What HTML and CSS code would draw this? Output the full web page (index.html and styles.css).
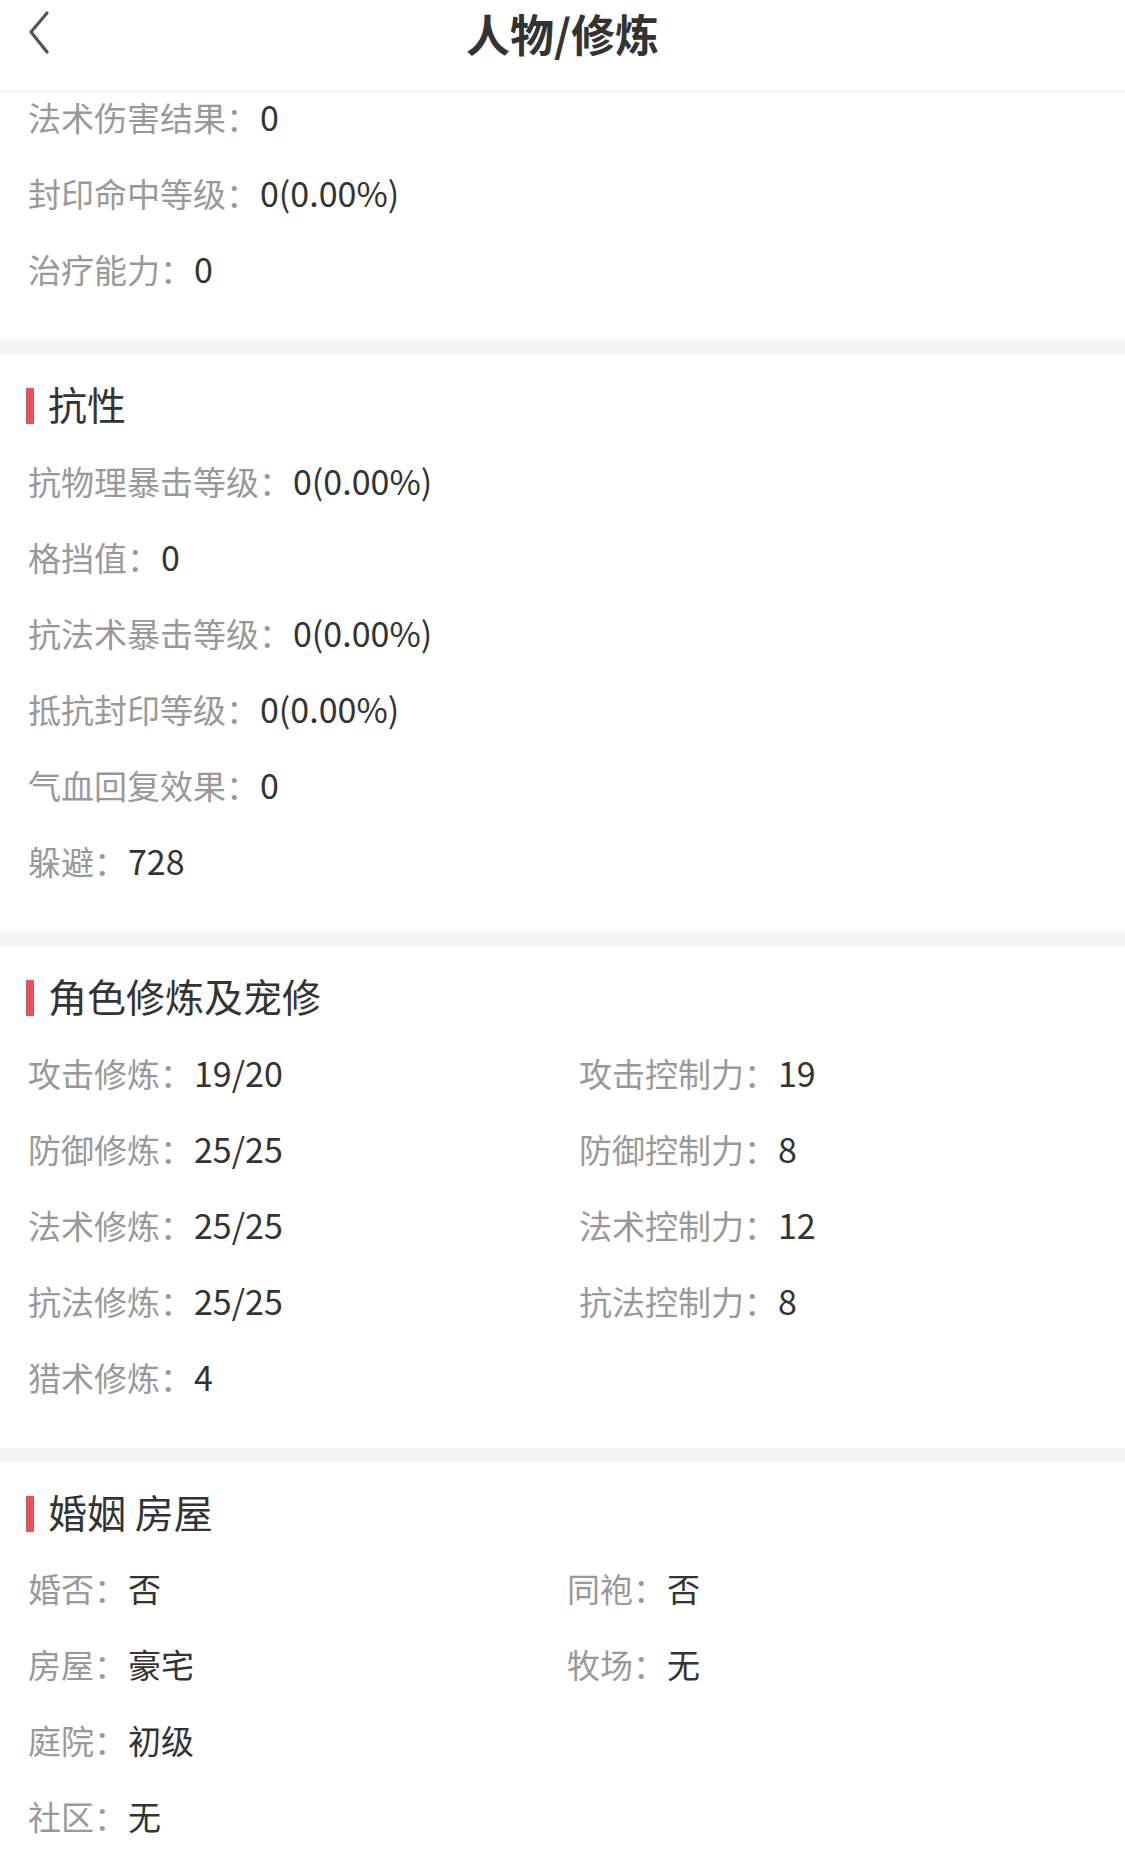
FILE: index.html
```html
<!DOCTYPE html>
<html lang="zh-CN">
<head>
    <meta charset="UTF-8">
    <title>人物/修炼</title>
    <meta name="viewport" content="width=device-width, initial-scale=1.0">
    <link rel="stylesheet" href="styles.css">
</head>
<body>
    <header class="nav">
        <a class="nav-back" href="#">
            <svg width="24" height="46" viewBox="0 0 24 46">
                <polyline points="19,3 3,22 19,42" fill="none" stroke="#555" stroke-width="3.2" stroke-linecap="round" stroke-linejoin="round"/>
            </svg>
        </a>
        <h1 class="nav-title">人物/修炼</h1>
        <span></span>
    </header>

    <main class="page">
        <section class="panel panel-cut">
            <ul class="attrs">
                <li><span class="label">法术伤害结果：</span><span class="value num">0</span></li>
                <li><span class="label">封印命中等级：</span><span class="value num">0(0.00%)</span></li>
                <li><span class="label">治疗能力：</span><span class="value num">0</span></li>
            </ul>
        </section>

        <section class="panel">
            <h2 class="panel-title">抗性</h2>
            <ul class="attrs">
                <li><span class="label">抗物理暴击等级：</span><span class="value num">0(0.00%)</span></li>
                <li><span class="label">格挡值：</span><span class="value num">0</span></li>
                <li><span class="label">抗法术暴击等级：</span><span class="value num">0(0.00%)</span></li>
                <li><span class="label">抵抗封印等级：</span><span class="value num">0(0.00%)</span></li>
                <li><span class="label">气血回复效果：</span><span class="value num">0</span></li>
                <li><span class="label">躲避：</span><span class="value num">728</span></li>
            </ul>
        </section>

        <section class="panel">
            <h2 class="panel-title">角色修炼及宠修</h2>
            <ul class="attrs cols cols-wide">
                <li><span class="label">攻击修炼：</span><span class="value num">19/20</span></li>
                <li><span class="label">攻击控制力：</span><span class="value num">19</span></li>
                <li><span class="label">防御修炼：</span><span class="value num">25/25</span></li>
                <li><span class="label">防御控制力：</span><span class="value num">8</span></li>
                <li><span class="label">法术修炼：</span><span class="value num">25/25</span></li>
                <li><span class="label">法术控制力：</span><span class="value num">12</span></li>
                <li><span class="label">抗法修炼：</span><span class="value num">25/25</span></li>
                <li><span class="label">抗法控制力：</span><span class="value num">8</span></li>
                <li><span class="label">猎术修炼：</span><span class="value num">4</span></li>
            </ul>
        </section>

        <section class="panel">
            <h2 class="panel-title">婚姻 房屋</h2>
            <ul class="attrs cols">
                <li><span class="label">婚否：</span><span class="value">否</span></li>
                <li><span class="label">同袍：</span><span class="value">否</span></li>
                <li><span class="label">房屋：</span><span class="value">豪宅</span></li>
                <li><span class="label">牧场：</span><span class="value">无</span></li>
                <li><span class="label">庭院：</span><span class="value">初级</span></li>
                <li></li>
                <li><span class="label">社区：</span><span class="value">无</span></li>
            </ul>
        </section>
    </main>
</body>
</html>
```

FILE: styles.css
```css
body {
    margin: 0;
    font-family: "Noto Sans CJK SC", "Noto Sans", sans-serif;
    background-color: #f4f4f4;
    color: #333;
}
.nav {
    position: sticky;
    top: 0;
    z-index: 1;
    display: grid;
    grid-template-columns: 1fr auto 1fr;
    align-items: center;
    height: 66px;
    padding: 0 28px 25px 28px;
    background: white;
    border-bottom: 1px solid #ececec;
}
.nav-back {
    display: flex;
    align-items: center;
}
.nav-title {
    margin: 0;
    font-size: 44px;
    font-weight: bold;
    color: #333;
    line-height: 66px;
}
.page {
    display: flex;
    flex-direction: column;
    gap: 14px;
}
.panel {
    background: white;
    padding: 14px 28px 32px 28px;
}
.panel-cut {
    padding-top: 0;
    margin-top: -12px;
}
.panel-title {
    display: flex;
    align-items: center;
    box-sizing: border-box;
    height: 76px;
    padding-bottom: 6px;
    margin: 0 0 0 -2px;
    font-size: 39px;
    font-weight: normal;
    color: #333;
}
.panel-title::before {
    content: "";
    width: 8px;
    height: 36px;
    margin: 6px 14px 0 0;
    background-color: #e6545b;
}
.attrs {
    list-style: none;
    margin: 0;
    padding: 0;
}
.attrs li {
    height: 76px;
    line-height: 73px;
    font-size: 33px;
    white-space: nowrap;
}
.cols {
    display: grid;
    grid-template-columns: 539px 1fr;
}
.cols-wide {
    grid-template-columns: 551px 1fr;
}
.label {
    color: #999;
}
.value {
    margin-left: 1px;
    color: #333;
}
.num {
    font-size: 34px;
}
```
